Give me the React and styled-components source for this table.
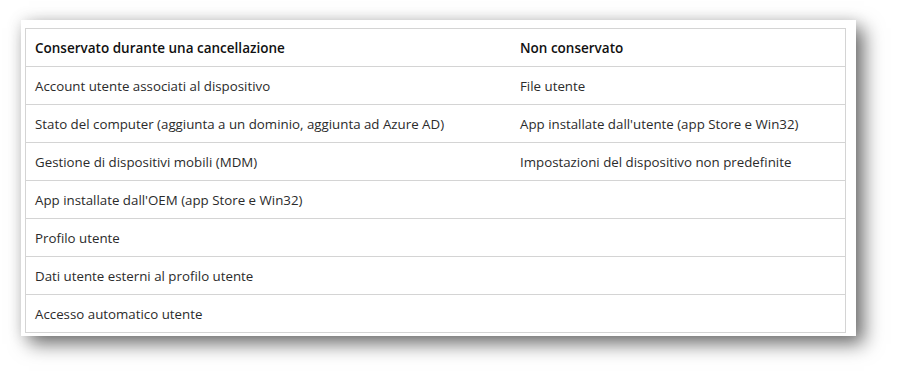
import styled, { createGlobalStyle } from "styled-components";

const Global = createGlobalStyle`
  html, body {
    margin: 0;
    background: #ffffff;
  }
`;

const Page = styled.div`
  width: 898px;
  height: 378px;
  padding: 20px 0 0 21px;
  box-sizing: border-box;
  background: #ffffff;
`;

const Card = styled.div`
  width: 835px;
  padding: 8px 10px 3px 4px;
  box-sizing: border-box;
  background: #ffffff;
  box-shadow: 8px 8px 18px rgba(0, 0, 0, 0.55), 0 0 14px rgba(0, 0, 0, 0.1);
`;

const Table = styled.table`
  width: 821px;
  border-collapse: collapse;
  border: 1px solid #d4d4d4;
  font-family: "Open Sans", "Noto Sans", sans-serif;
  font-size: 13.3px;
  color: #1f1f1f;
`;

const Row = styled.tr`
  height: 38px;
  border-bottom: 1px solid #d4d4d4;
`;

const Head = styled.th`
  text-align: left;
  font-weight: 600;
  font-size: 13.5px;
  color: #111111;
  padding: 0 9px;
  width: ${(p) => p.$w || "auto"};
`;

const Cell = styled.td`
  padding: 0 9px;
  color: #2b2b2b;
`;

const rows = [
  ["Account utente associati al dispositivo", "File utente"],
  [
    "Stato del computer (aggiunta a un dominio, aggiunta ad Azure AD)",
    "App installate dall'utente (app Store e Win32)",
  ],
  [
    "Gestione di dispositivi mobili (MDM)",
    "Impostazioni del dispositivo non predefinite",
  ],
  ["App installate dall'OEM (app Store e Win32)", ""],
  ["Profilo utente", ""],
  ["Dati utente esterni al profilo utente", ""],
  ["Accesso automatico utente", ""],
];

export default function App() {
  return (
    <Page>
      <Global />
      <Card>
        <Table>
          <thead>
            <Row>
              <Head $w="467px">Conservato durante una cancellazione</Head>
              <Head>Non conservato</Head>
            </Row>
          </thead>
          <tbody>
            {rows.map((r, i) => (
              <Row key={i}>
                <Cell>{r[0]}</Cell>
                <Cell>{r[1]}</Cell>
              </Row>
            ))}
          </tbody>
        </Table>
      </Card>
    </Page>
  );
}
